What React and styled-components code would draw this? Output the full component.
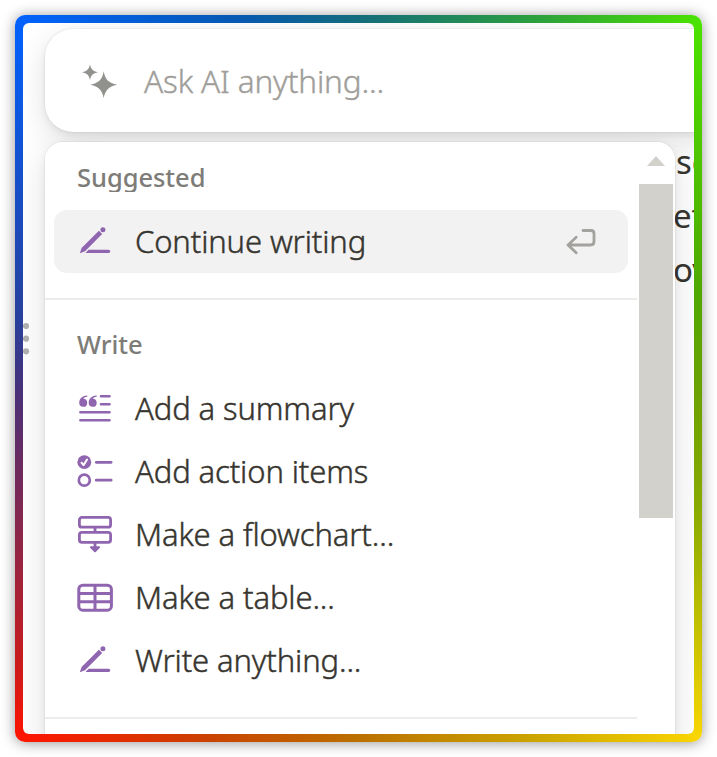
import styled, { createGlobalStyle } from "styled-components";

const GlobalStyle = createGlobalStyle`
  * {
    box-sizing: border-box;
  }

  body {
    margin: 0;
    background: #fff;
    font-family: "Noto Sans", "Open Sans", sans-serif;
    overflow: hidden;
  }
`;

const Page = styled.div`
  width: 717px;
  height: 757px;
  padding: 15px;
  overflow: hidden;
`;

// One gradient strip per edge, meeting in the four corner colours.
// The left and right halves behind them fill the rounded inner corners.
const Frame = styled.div`
  width: 687px;
  height: 727px;
  padding: 8px;
  border-radius: 10px;
  background:
    linear-gradient(to right, #0062ff, #0659b0 33%, #136c7c 50%, #2ca03c 76%, #4be400) top / 100% 8px
      no-repeat,
    linear-gradient(to right, #ff1400, #ca4200 28%, #bb7000 50%, #cba400 75%, #fad600) bottom / 100%
      8px no-repeat,
    linear-gradient(to bottom, #0062ff, #28409c 42%, #4a3078 52%, #c41c20 88%, #ff1400) left / 50%
      100% no-repeat,
    linear-gradient(to bottom, #4be400, #50a800 38%, #6ca200 52%, #8aab00 68%, #fad600) right / 50%
      100% no-repeat;
  box-shadow: 0 1px 14px rgba(0, 0, 0, 0.42);
`;

const Window = styled.div`
  position: relative;
  height: 100%;
  overflow: hidden;
  border-radius: 6px;
  background: #fff;
`;

const DocumentText = styled.div`
  display: flex;
  flex-direction: column;
  padding: 112px 0 0 650px;
  color: #37352f;
  font-size: 33px;
  line-height: 54px;
  white-space: nowrap;
`;

const DocumentLine = styled.span`
  padding-left: ${({ $indent }) => $indent}px;
`;

const DragHandle = styled.svg`
  position: absolute;
  left: 0;
  top: 299px;
  width: 8px;
  height: 34px;
  fill: #b2b2b1;
`;

const Prompt = styled.div`
  position: absolute;
  left: 22px;
  top: 6px;
  z-index: 1;
  width: 760px;
  height: 103px;
  display: flex;
  align-items: center;
  gap: 26px;
  padding-left: 37px;
  border-radius: 28px;
  background: #fff;
  box-shadow:
    0 0 0 1px rgba(15, 15, 15, 0.03),
    0 3px 7px rgba(15, 15, 15, 0.07),
    0 9px 32px rgba(15, 15, 15, 0.12);

  svg {
    margin-top: 3px;
  }
`;

const Placeholder = styled.span`
  color: #9f9e9a;
  font-size: 31.5px;
  font-weight: 300;
  line-height: 42px;
  letter-spacing: -0.15px;
  white-space: nowrap;
  -webkit-text-stroke: 0.4px currentColor;
`;

const Menu = styled.div`
  position: absolute;
  left: 22px;
  top: 119px;
  z-index: 2;
  display: flex;
  width: 630px;
  height: 700px;
  border-radius: 18px;
  background: #fff;
  overflow: hidden;
`;

// Sits under the prompt, so that the shadow does not fall on it
const MenuShadow = styled.div`
  position: absolute;
  left: 22px;
  top: 119px;
  width: 630px;
  height: 700px;
  border-radius: 18px;
  box-shadow:
    0 0 0 1px rgba(15, 15, 15, 0.04),
    0 3px 10px rgba(15, 15, 15, 0.06),
    0 9px 36px rgba(15, 15, 15, 0.12);
`;

const MenuList = styled.div`
  width: 592px;
`;

const Section = styled.section`
  padding: ${({ $top }) => $top}px 9px 25px;
  border-bottom: 2px solid #ececeb;
`;

const SectionLabel = styled.h2`
  height: ${({ $height }) => $height}px;
  margin: 0 0 ${({ $gap }) => $gap}px;
  padding-left: 23px;
  overflow: hidden;
  color: #7d7c78;
  font-size: 25.5px;
  font-weight: 500;
  line-height: 34px;
  letter-spacing: -0.05px;
`;

const Item = styled.div`
  display: flex;
  align-items: center;
  height: 63px;
  padding: 0 32px 0 22px;
  border-radius: 13px;
  background: ${({ $active }) => ($active ? "#f2f2f2" : "transparent")};
`;

const ItemIcon = styled.svg`
  flex: none;
  width: 38px;
  height: 40px;
  margin: 1px 21px 0 0;
  color: #9065b0;
`;

const ItemText = styled.span`
  flex: 1;
  padding-bottom: 1px;
  color: #37352f;
  font-size: 31px;
  font-weight: 300;
  line-height: 42px;
  letter-spacing: -0.12px;
  white-space: nowrap;
  -webkit-text-stroke: 0.45px currentColor;
`;

const Scrollbar = styled.div`
  display: flex;
  flex-direction: column;
  align-items: center;
  width: 34px;
  margin-left: 2px;
  padding-top: 14px;
`;

const ScrollArrow = styled.svg`
  width: 18px;
  height: 10px;
  margin-bottom: 18px;
  fill: #d2d1cc;
`;

const ScrollThumb = styled.div`
  width: 34px;
  height: 334px;
  background: #d2d1cc;
`;

const SparkleIcon = () => (
  <svg width="36" height="36" viewBox="0 0 36 36" fill="#91918d">
    <path d="M8 .5c1 4.500 2.600 6.600 8 7.700-5.400 1.100-7 3.200-8 7.800-1-4.600-2.600-6.700-8-7.800C5.400 7.100 7 5 8 .5Z" />
    <path d="M21.700 7.500c1.700 8 4.500 11.300 13.600 13.300-9.100 2-11.900 5.300-13.600 13.400-1.700-8.100-4.500-11.400-13.600-13.400 9.100-2 11.900-5.300 13.600-13.300Z" />
  </svg>
);

const ReturnIcon = () => (
  <svg
    width="30"
    height="26"
    viewBox="0 0 30 26"
    fill="none"
    stroke="#a3a29e"
    strokeWidth="2.8"
    strokeLinecap="round"
    strokeLinejoin="round"
  >
    <path d="M17 1.500h8q3 0 3 3V12.500q0 3.500-3.500 3.500H2M10.200 8.300 2 16l8.200 7.800" />
  </svg>
);

// Every menu icon is drawn in the same 38x40 box, centred on the row
const PencilIcon = () => (
  <ItemIcon viewBox="0 0.5 38 40" fill="currentColor">
    <path d="M3.800 31.700l1.800-5.100L22.900 9.300l3.300 3.300L9 29.800Z" />
    <circle cx="26.900" cy="8.300" r="2.500" />
    <path d="M12.600 28.200h20.100a1.600 1.600 0 0 1 0 3.200H9.400Z" />
  </ItemIcon>
);

const SummaryIcon = () => (
  <ItemIcon viewBox="0 0 38 40" fill="currentColor">
    <path d="M10.800 6.400C6.200 6.700 3.200 9.700 3.200 13.800a4 4 0 1 0 4.200-4c.5-1.200 1.700-1.900 3.400-2.100a.65.65 0 0 0 0-1.300Z" />
    <path d="M20.300 6.400c-4.600.3-7.600 3.300-7.600 7.400a4 4 0 1 0 4.200-4c.5-1.200 1.700-1.900 3.400-2.100a.65.65 0 0 0 0-1.300Z" />
    <path
      d="M25 7.300h8.500M25 15.200h8.500M4.400 23.300h29.100M4.400 31.300h29.100"
      stroke="currentColor"
      strokeWidth="2.6"
      strokeLinecap="round"
    />
  </ItemIcon>
);

const ChecklistIcon = () => (
  <ItemIcon
    viewBox="0 0 38 40"
    fill="none"
    stroke="currentColor"
    strokeWidth="2.7"
    strokeLinecap="round"
    strokeLinejoin="round"
  >
    <circle cx="8.300" cy="10.200" r="6.900" fill="currentColor" stroke="none" />
    <path d="M5.500 10.700l2 2.400 3.500-5.500" stroke="#fff" strokeWidth="2" />
    <circle cx="8.300" cy="28.200" r="5.500" />
    <path d="M20.200 10.300h15M20.200 28.200h15" />
  </ItemIcon>
);

const FlowchartIcon = () => (
  <ItemIcon viewBox="0 0 38 40" fill="none" stroke="currentColor" strokeWidth="2.8">
    <rect x="3.400" y="2.400" width="31.200" height="9.800" rx="2.500" />
    <rect x="3.400" y="17.300" width="31.200" height="10" rx="2.500" />
    <path d="M19 12.500v4.500M19 27.500v5" />
    <path
      d="M15 32.300h8l-4 4Z"
      fill="currentColor"
      strokeWidth="2"
      strokeLinejoin="round"
    />
  </ItemIcon>
);

const TableIcon = () => (
  <ItemIcon viewBox="0 0 38 40" fill="none" stroke="currentColor" strokeWidth="3">
    <rect x="2.800" y="7.200" width="32.600" height="25" rx="4" />
    <path d="M19 7v25M3 15.500h32M3 23.700h32" />
  </ItemIcon>
);

const writeItems = [
  { label: "Add a summary", icon: SummaryIcon },
  { label: "Add action items", icon: ChecklistIcon },
  { label: "Make a flowchart...", icon: FlowchartIcon },
  { label: "Make a table...", icon: TableIcon },
  { label: "Write anything...", icon: PencilIcon },
];

const App = () => {
  return (
    <>
      <GlobalStyle />
      <Page>
        <Frame>
          <Window>
            <DocumentText>
              <DocumentLine $indent={3}>se</DocumentLine>
              <DocumentLine $indent={0}>et</DocumentLine>
              <DocumentLine $indent={0}>ov</DocumentLine>
            </DocumentText>
            <DragHandle viewBox="0 0 8 34">
              <circle cx="3" cy="4" r="3.100" />
              <circle cx="3" cy="16.700" r="3.100" />
              <circle cx="3" cy="29.300" r="3.100" />
            </DragHandle>

            <MenuShadow />
            <Prompt>
              <SparkleIcon />
              <Placeholder>Ask AI anything...</Placeholder>
            </Prompt>

            <Menu>
              <MenuList>
                <Section $top={18}>
                  <SectionLabel $height={32} $gap={18}>
                    Suggested
                  </SectionLabel>
                  <Item $active>
                    <PencilIcon />
                    <ItemText>Continue writing</ItemText>
                    <ReturnIcon />
                  </Item>
                </Section>
                <Section $top={27}>
                  <SectionLabel $height={34} $gap={16}>
                    Write
                  </SectionLabel>
                  {writeItems.map(({ label, icon: Icon }) => (
                    <Item key={label}>
                      <Icon />
                      <ItemText>{label}</ItemText>
                    </Item>
                  ))}
                </Section>
              </MenuList>
              <Scrollbar>
                <ScrollArrow viewBox="0 0 18 10">
                  <path d="M9 0l9 10H0Z" />
                </ScrollArrow>
                <ScrollThumb />
              </Scrollbar>
            </Menu>
          </Window>
        </Frame>
      </Page>
    </>
  );
};

export default App;
